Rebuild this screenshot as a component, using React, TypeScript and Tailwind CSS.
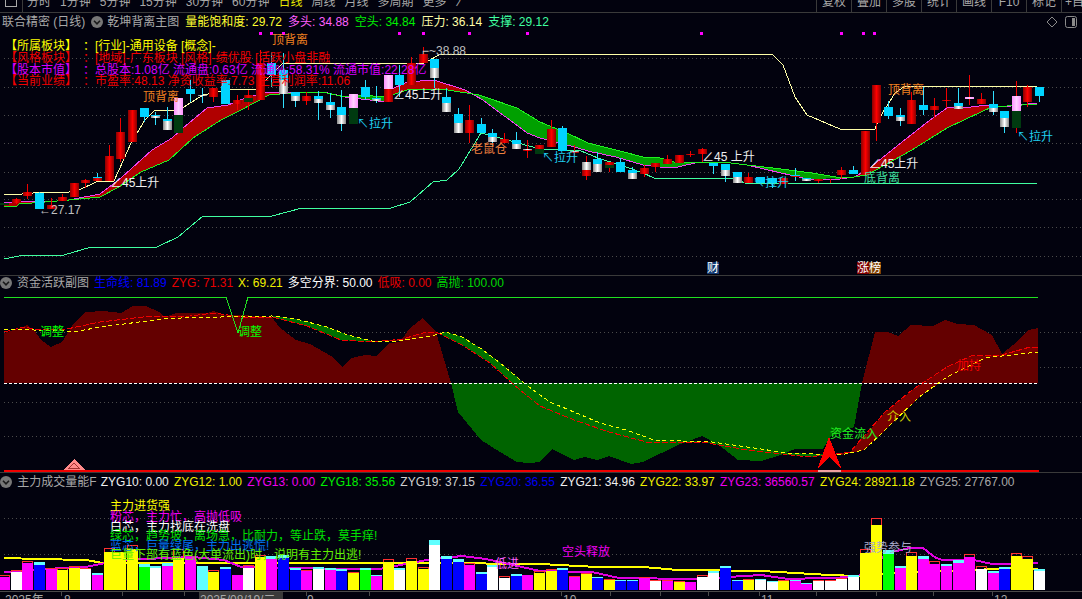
import React from "react"

type Pt = [number, number]

const X = (i: number) => 4 + 11.63 * i

const at = (pts: Pt[], x: number) => {
  if (x <= pts[0][0]) return pts[0][1]
  for (let i = 1; i < pts.length; i++) {
    if (x <= pts[i][0]) {
      const [x0, y0] = pts[i - 1]
      const [x1, y1] = pts[i]
      return y0 + ((y1 - y0) * (x - x0)) / (x1 - x0)
    }
  }
  return pts[pts.length - 1][1]
}

const toStr = (pts: Pt[]) => pts.map((p) => p.join(",")).join(" ")

function Band({ a, b, from, to, up, down }: { a: Pt[]; b: Pt[]; from: number; to: number; up: string; down: string }) {
  const rects = []
  for (let x = from; x < to; x++) {
    const ya = at(a, x)
    const yb = at(b, x)
    rects.push(<rect key={x} x={x} y={Math.min(ya, yb)} width={1} height={Math.abs(ya - yb)} fill={ya < yb ? up : down} />)
  }
  return <g shapeRendering="crispEdges">{rects}</g>
}

function Grid({ ys }: { ys: number[] }) {
  return (
    <g shapeRendering="crispEdges">
      {ys.map((y) => (
        <line key={y} x1={4} x2={1082} y1={y + 0.5} y2={y + 0.5} stroke="#4a4a4a" strokeDasharray="1 3" />
      ))}
    </g>
  )
}

function Line({ pts, c, w = 1, dash }: { pts: Pt[]; c: string; w?: number; dash?: string }) {
  return <polyline points={toStr(pts)} fill="none" stroke={c} strokeWidth={w} strokeDasharray={dash} shapeRendering="crispEdges" />
}

function Label({ x, y, c, t, size = 12 }: { x: number; y: number; c: string; t: string; size?: number }) {
  return (
    <text x={x} y={y} fill={c} fontSize={size} dominantBaseline="central">
      {t}
    </text>
  )
}

function Chevron() {
  return (
    <svg width="12" height="12" viewBox="0 0 12 12" className="shrink-0">
      <circle cx="6" cy="6" r="6" fill="#777" />
      <path d="M3 4.8 L6 7.8 L9 4.8" fill="none" stroke="#1a1a1a" strokeWidth="1.6" />
    </svg>
  )
}

const navItems = ["分时", "1分钟", "5分钟", "15分钟", "30分钟", "60分钟", "日线", "周线", "月线", "多周期", "更多", "〉"]
const tools = ["复权", "叠加", "多股", "统计", "画线", "F10", "标记"]

function TopBar() {
  return (
    <div className="flex h-[13px] shrink-0 overflow-hidden border-b border-[#3a3a3a] text-[12px] leading-[12px] text-[#a8a8a8]">
      <div className="ml-[5px] mt-[-4px] h-[11px] w-[12px] border border-[#a8a8a8]" />
      <div className="ml-[5px] w-px bg-[#3a3a3a]" />
      <div className="ml-[4px] mt-[-4px] flex gap-[9px]">
        {navItems.map((n) => (
          <span key={n} className={n === "日线" ? "text-[#e8e800]" : ""}>
            {n}
          </span>
        ))}
      </div>
      <div className="ml-auto flex">
        {tools.map((n) => (
          <div key={n} className="w-[35px] border-l border-[#3a3a3a] text-center">
            <span className="relative top-[-4px]">{n}</span>
          </div>
        ))}
        <div className="w-[21px] whitespace-nowrap border-l border-[#3a3a3a] pl-[3px]">
          <span className="relative top-[-4px]">+自</span>
        </div>
      </div>
    </div>
  )
}

type Item = { t: string; c: string }

function Values({ items }: { items: Item[] }) {
  return (
    <>
      {items.map((i) => (
        <span key={i.t} className={`whitespace-nowrap ${i.c}`}>
          {i.t}
        </span>
      ))}
    </>
  )
}

const mainValues: Item[] = [
  { t: "量能饱和度: 29.72", c: "text-[#ffff30]" },
  { t: "多头: 34.88", c: "text-[#ff60ff]" },
  { t: "空头: 34.84", c: "text-[#00f000]" },
  { t: "压力: 36.14", c: "text-[#ffffa8]" },
  { t: "支撑: 29.12", c: "text-[#40ffa0]" },
]

const fundValues: Item[] = [
  { t: "生命线: 81.89", c: "text-[#0000ff]" },
  { t: "ZYG: 71.31", c: "text-[#e80000]" },
  { t: "X: 69.21", c: "text-[#f0f000]" },
  { t: "多空分界: 50.00", c: "text-[#ffffff]" },
  { t: "低吸: 0.00", c: "text-[#e80000]" },
  { t: "高抛: 100.00", c: "text-[#00d800]" },
]

const volValues: Item[] = [
  { t: "ZYG10: 0.00", c: "text-[#f0f0f0]" },
  { t: "ZYG12: 1.00", c: "text-[#f0f000]" },
  { t: "ZYG13: 0.00", c: "text-[#f000f0]" },
  { t: "ZYG18: 35.56", c: "text-[#00f000]" },
  { t: "ZYG19: 37.15", c: "text-[#d0d0d0]" },
  { t: "ZYG20: 36.55", c: "text-[#0000f0]" },
  { t: "ZYG21: 34.96", c: "text-[#f0f0f0]" },
  { t: "ZYG22: 33.97", c: "text-[#f0f000]" },
  { t: "ZYG23: 36560.57", c: "text-[#f000f0]" },
  { t: "ZYG24: 28921.18", c: "text-[#f0f000]" },
  { t: "ZYG25: 27767.00", c: "text-[#a8a8a8]" },
]

type Kind = "r" | "c" | "w" | "p" | "g" | "x" | "q" | "k"

const kinds: Record<Kind, [string, string, string]> = {
  r: ["url(#red)", "url(#red)", "#f00000"],
  c: ["#00d4ff", "#00d4ff", "#30e0ff"],
  w: ["#00d4ff", "url(#silver)", "#30e0ff"],
  p: ["url(#pink)", "#003a10", "#f00000"],
  g: ["url(#red)", "#003a10", "#f00000"],
  x: ["url(#silver)", "url(#red)", "#f00000"],
  q: ["url(#pink)", "url(#red)", "#f00000"],
  k: ["#00d4ff", "url(#red)", "#30e0ff"],
}

// kind, body top, split, body bottom, wick top, wick bottom
const candles: [Kind, number, number, number, number, number][] = [
  ["g", 203, 203, 205, 203, 205], ["r", 199, 203, 203, 198, 204], ["r", 192, 196, 196, 184, 199], ["c", 193, 209, 209, 192, 209],
  ["r", 205, 209, 209, 198, 209], ["r", 197, 201, 201, 194, 201], ["r", 183, 197, 197, 183, 197], ["r", 180, 183, 183, 179, 188],
  ["k", 177, 178, 181, 173, 181], ["r", 156, 181, 181, 145, 181], ["r", 132, 159, 159, 118, 162], ["r", 110, 142, 142, 110, 142],
  ["c", 108, 117, 117, 108, 122], ["w", 115, 116, 118, 112, 125], ["w", 119, 121, 130, 107, 130], ["p", 98, 115, 133, 98, 133],
  ["c", 89, 94, 94, 80, 102], ["w", 95, 95, 96, 88, 103], ["r", 88, 97, 97, 88, 102], ["c", 80, 104, 104, 80, 104],
  ["r", 100, 104, 104, 95, 110], ["g", 95, 98, 102, 90, 110], ["r", 63, 100, 100, 50, 100], ["c", 63, 75, 75, 52, 87],
  ["w", 70, 80, 94, 53, 108], ["w", 92, 96, 101, 92, 107], ["r", 96, 101, 101, 92, 105], ["w", 96, 99, 103, 91, 120],
  ["w", 102, 105, 110, 93, 118], ["w", 107, 115, 124, 90, 131], ["p", 94, 108, 124, 94, 124], ["c", 87, 97, 97, 80, 100],
  ["w", 98, 99, 101, 86, 103], ["q", 75, 89, 102, 75, 102], ["c", 75, 85, 85, 65, 97], ["r", 63, 85, 85, 57, 85],
  ["r", 54, 63, 63, 47, 63], ["w", 59, 68, 78, 59, 88], ["w", 97, 103, 112, 88, 112], ["w", 114, 123, 133, 108, 133],
  ["r", 120, 133, 133, 105, 143], ["c", 124, 133, 133, 118, 133], ["w", 133, 137, 142, 129, 147], ["r", 139, 143, 143, 133, 143],
  ["w", 140, 144, 149, 132, 149], ["x", 149, 150, 151, 140, 158], ["g", 145, 149, 154, 145, 154], ["r", 129, 147, 147, 120, 147],
  ["c", 128, 151, 151, 126, 151], ["x", 151, 152, 153, 145, 158], ["x", 162, 170, 176, 156, 180], ["w", 159, 164, 172, 152, 172],
  ["g", 162, 165, 168, 162, 172], ["c", 162, 172, 172, 158, 172], ["w", 170, 173, 179, 167, 179], ["r", 168, 174, 174, 165, 177],
  ["r", 163, 167, 167, 163, 172], ["r", 159, 164, 164, 155, 164], ["r", 155, 163, 163, 155, 163], ["r", 154, 155, 155, 151, 157],
  ["r", 149, 154, 154, 148, 162], ["c", 163, 166, 166, 163, 174], ["w", 164, 170, 176, 164, 182], ["w", 172, 177, 183, 172, 183],
  ["r", 177, 183, 183, 173, 183], ["c", 177, 183, 183, 177, 183], ["c", 178, 183, 183, 178, 188], ["r", 178, 184, 184, 178, 184],
  ["k", 175, 176, 177, 168, 181], ["w", 178, 179, 181, 178, 181], ["r", 179, 181, 181, 179, 183], ["g", 178, 178, 179, 178, 183],
  ["r", 170, 175, 175, 167, 179], ["c", 170, 174, 174, 166, 174], ["r", 131, 175, 175, 131, 175], ["r", 85, 123, 123, 85, 141],
  ["c", 107, 116, 116, 101, 119], ["w", 115, 117, 121, 108, 126], ["r", 100, 124, 124, 92, 124], ["c", 105, 110, 110, 87, 115],
  ["r", 106, 110, 110, 98, 117], ["r", 100, 101, 101, 88, 108], ["w", 103, 106, 109, 88, 109], ["q", 97, 99, 99, 75, 105],
  ["r", 99, 104, 104, 93, 104], ["w", 104, 108, 112, 91, 115], ["w", 111, 118, 127, 111, 133], ["p", 96, 111, 128, 81, 133],
  ["r", 87, 102, 102, 85, 107], ["c", 87, 96, 96, 87, 102],
]

const pinkLine: Pt[] = [[4, 203], [21, 201], [45, 202], [69, 200], [100, 194], [121, 178], [152, 150], [172, 138], [183, 128], [207, 108], [228, 105], [248, 97], [269, 92], [303, 92], [328, 93], [345, 97], [386, 102], [390, 90], [407, 82], [434, 80], [465, 90], [483, 100], [500, 113], [510, 120], [527, 133], [540, 138], [567, 145], [592, 152], [616, 157], [643, 165], [660, 167], [678, 167], [699, 162], [723, 162], [747, 165], [781, 173], [812, 180], [840, 179], [854, 177], [867, 170], [902, 142], [930, 120], [947, 108], [971, 107], [988, 105], [1002, 107], [1037, 103]]
const greenLine: Pt[] = [[4, 206], [17, 206], [19, 204], [45, 202], [69, 200], [100, 197], [117, 188], [141, 172], [169, 160], [193, 138], [221, 120], [241, 110], [269, 95], [303, 92], [327, 93], [345, 97], [359, 95], [386, 97], [407, 90], [434, 89], [448, 90], [479, 95], [517, 108], [540, 122], [567, 133], [588, 143], [616, 150], [643, 157], [660, 158], [678, 163], [688, 162], [723, 162], [747, 165], [781, 169], [812, 173], [836, 177], [854, 177], [867, 175], [885, 165], [912, 150], [947, 128], [981, 112], [992, 107], [1037, 104]]
const pressure: Pt[] = [[4, 194], [22, 194], [45, 192], [69, 192], [79, 190], [96, 182], [114, 181], [119, 170], [131, 143], [145, 120], [155, 110], [179, 110], [203, 95], [231, 89], [257, 89], [283, 63], [424, 63], [441, 54], [772, 54], [783, 65], [795, 97], [807, 115], [840, 129], [875, 129], [880, 117], [895, 93], [905, 86], [1037, 86]]
const support: Pt[] = [[4, 259], [24, 255], [64, 255], [91, 247], [157, 247], [178, 237], [203, 216], [272, 216], [302, 208], [391, 208], [410, 202], [433, 182], [447, 180], [459, 169], [481, 133], [507, 140], [540, 149], [581, 151], [598, 158], [626, 167], [643, 173], [654, 178], [733, 178], [745, 183], [1037, 183]]

const marks = [260, 271, 283, 399, 423, 469, 527, 701, 841, 863, 874]

const mainLabels = [
  { x: 272, y: 40, c: "#f08020", t: "顶背离" },
  { x: 143, y: 97, c: "#f08020", t: "顶背离" },
  { x: 888, y: 90, c: "#f08020", t: "顶背离" },
  { x: 357, y: 124, c: "#20d0f0", t: "↖拉升" },
  { x: 542, y: 158, c: "#20d0f0", t: "↖拉升" },
  { x: 753, y: 183, c: "#20d0f0", t: "↖拉升" },
  { x: 1017, y: 137, c: "#20d0f0", t: "↖拉升" },
  { x: 110, y: 183, c: "#f0f0f0", t: "∠45上升" },
  { x: 393, y: 95, c: "#f0f0f0", t: "∠45上升" },
  { x: 702, y: 157, c: "#f0f0f0", t: "∠45 上升" },
  { x: 869, y: 164, c: "#f0f0f0", t: "∠45上升" },
  { x: 471, y: 149, c: "#f08040", t: "老鼠仓" },
  { x: 864, y: 178, c: "#40e0a0", t: "底背离" },
  { x: 39, y: 210, c: "#c0c0c0", t: "←27.17" },
  { x: 422, y: 51, c: "#c0c0c0", t: "⌐~38.88" },
]

const infoRows = [
  { c: "#ffff00", k: "【所属板块】", v: "[行业]-通用设备 [概念]-", y: 46 },
  { c: "#f00000", k: "【风格板块】", v: "[地域]-广东板块 [风格]-绩优股 [活跃小盘非融", y: 58 },
  { c: "#d800ff", k: "【股本市值】", v: "总股本:1.08亿 流通盘:0.63亿 流通%:58.31% 流通市值:22.28亿", y: 70 },
  { c: "#f00000", k: "【当前业绩】", v: "市盈率:48.13 净资收益率:7.73 主营利润率:11.06", y: 81 },
]

function MainChart() {
  return (
    <svg width={1082} height={244} viewBox="0 31 1082 244" className="block">
      <defs>
        <linearGradient id="red">
          <stop offset="0" stopColor="#8a0000" />
          <stop offset="0.5" stopColor="#ff0000" />
          <stop offset="1" stopColor="#8a0000" />
        </linearGradient>
        <linearGradient id="silver">
          <stop offset="0" stopColor="#888888" />
          <stop offset="0.5" stopColor="#ffffff" />
          <stop offset="1" stopColor="#888888" />
        </linearGradient>
        <linearGradient id="pink">
          <stop offset="0" stopColor="#ff90ff" />
          <stop offset="0.5" stopColor="#ffd0ff" />
          <stop offset="1" stopColor="#ff90ff" />
        </linearGradient>
      </defs>
      <Grid ys={[58, 87, 115, 143, 172, 199, 227, 256]} />
      {marks.map((x) => (
        <rect key={x} x={x - 1} y={32} width={3} height={3} fill="#ff00ff" />
      ))}
      <Band a={pinkLine} b={greenLine} from={4} to={1037} up="#b00000" down="#00a000" />
      <Line pts={pinkLine} c="#f040f0" />
      <Line pts={greenLine} c="#20f020" />
      <Line pts={pressure} c="#ffffa8" />
      <Line pts={support} c="#40ffa0" />
      <g shapeRendering="crispEdges">
        {candles.map(([k, top, split, bot, wt, wb], i) => {
          const [upper, lower, wick] = kinds[k]
          const x = Math.round(X(i))
          return (
            <g key={i}>
              <line x1={x + 0.5} x2={x + 0.5} y1={wt} y2={wb} stroke={wick} />
              <rect x={x - 4} y={top} width={9} height={Math.max(split - top, 1)} fill={upper} />
              {bot > split && <rect x={x - 4} y={split} width={9} height={bot - split} fill={lower} />}
            </g>
          )
        })}
      </g>
      {infoRows.map((r) => (
        <g key={r.k}>
          <Label x={5} y={r.y} c={r.c} t={r.k} />
          <Label x={83} y={r.y} c={r.c} t="：" />
          <Label x={95} y={r.y} c={r.c} t={r.v} />
        </g>
      ))}
      {mainLabels.map((l) => (
        <Label key={l.x + l.t} x={l.x} y={l.y} c={l.c} t={l.t} />
      ))}
      <rect x={707} y={262} width={12} height={12} fill="#103870" />
      <Label x={707} y={268} c="#ffffff" t="财" />
      <rect x={857} y={262} width={12} height={12} fill="#800000" />
      <rect x={869} y={262} width={12} height={12} fill="#804000" />
      <Label x={857} y={268} c="#ffffff" t="涨榜" />
    </svg>
  )
}

const redArea: Pt[] = [[4, 383], [4, 333], [21, 328], [27, 325], [34, 330], [41, 340], [51, 347], [62, 342], [74, 323], [86, 312], [103, 311], [121, 313], [133, 306], [146, 306], [159, 312], [165, 317], [176, 313], [207, 313], [214, 311], [224, 315], [241, 315], [272, 317], [279, 327], [296, 340], [310, 344], [331, 356], [342, 367], [352, 358], [365, 355], [376, 356], [390, 343], [400, 342], [410, 328], [423, 318], [436, 332], [451, 383]]
const greenArea: Pt[] = [[451, 383], [458, 412], [481, 440], [500, 452], [517, 462], [529, 463], [540, 462], [552, 449], [574, 460], [585, 457], [597, 460], [609, 456], [631, 464], [643, 462], [678, 445], [702, 436], [719, 445], [738, 460], [761, 461], [781, 455], [795, 449], [823, 449], [830, 437], [854, 427], [862, 383]]
const redArea2: Pt[] = [[862, 383], [875, 332], [888, 332], [898, 336], [911, 325], [933, 326], [945, 320], [957, 324], [974, 325], [992, 335], [1002, 354], [1019, 340], [1028, 330], [1038, 328], [1038, 383]]
const yellowX: Pt[] = [[4, 329], [64, 331], [79, 331], [100, 327], [124, 324], [162, 319], [200, 317], [221, 317], [272, 316], [296, 319], [327, 327], [348, 335], [372, 341], [396, 341], [431, 336], [446, 332], [462, 337], [483, 350], [500, 363], [524, 383], [540, 395], [550, 402], [574, 412], [600, 423], [626, 430], [654, 440], [712, 442], [747, 447], [788, 453], [840, 455], [864, 450], [885, 430], [919, 397], [947, 377], [985, 358], [1002, 356], [1038, 352]]
const redZyg: Pt[] = [[4, 332], [24, 327], [34, 329], [62, 330], [100, 322], [143, 317], [190, 316], [214, 313], [241, 317], [272, 317], [307, 326], [341, 340], [372, 342], [403, 339], [426, 332], [436, 332], [462, 345], [490, 363], [514, 385], [540, 406], [574, 420], [609, 432], [650, 443], [702, 442], [747, 450], [809, 457], [850, 452], [885, 412], [912, 390], [947, 367], [971, 356], [1002, 355], [1030, 347], [1038, 347]]
const highLine: Pt[] = [[4, 297], [226, 297], [238, 333], [248, 297], [1038, 297]]

function FundChart() {
  return (
    <svg width={1082} height={183} viewBox="0 290 1082 183" className="block">
      <Grid ys={[332, 367, 402, 436]} />
      <g shapeRendering="crispEdges">
        <polygon points={toStr(redArea)} fill="#640000" />
        <polygon points={toStr(redArea2)} fill="#640000" />
        <polygon points={toStr(greenArea)} fill="#006400" />
      </g>
      <Band a={yellowX} b={redZyg} from={272} to={1038} up="#007000" down="#7a0000" />
      <Line pts={redZyg} c="#f00000" dash="6 2" />
      <Line pts={yellowX} c="#ffff00" dash="4 3" />
      <Line pts={highLine} c="#20e020" />
      <line x1={4} x2={1039} y1={383.5} y2={383.5} stroke="#ffffff" strokeDasharray="3 2" shapeRendering="crispEdges" />
      <line x1={4} x2={1039} y1={470.5} y2={470.5} stroke="#f00000" strokeWidth={2} shapeRendering="crispEdges" />
      <path d="M829 437 L842 470 L829 457 L817 470 Z" fill="#ff0000" shapeRendering="crispEdges" />
      <line x1={818} x2={841} y1={470.5} y2={470.5} stroke="#f0a0a0" strokeWidth={2} shapeRendering="crispEdges" />
      <path d="M74 459 L85 470 L63 470 Z" fill="#ff8a8a" shapeRendering="crispEdges" />
      <path d="M74 463 L79 468 L69 468 Z" fill="none" stroke="#a03030" shapeRendering="crispEdges" />
      <Label x={40} y={332} c="#00ff00" t="调整" />
      <Label x={238} y={332} c="#00ff00" t="调整" />
      <Label x={830} y={434} c="#20f020" t="资金流入" />
      <Label x={887} y={417} c="#c8c800" t="介入" />
      <Label x={957} y={366} c="#f00000" t="加持" />
    </svg>
  )
}

type Bar = [string, number, "o" | "c", number]

const barColors: Record<string, string> = { m: "#ff00ff", w: "#ffffff", b: "#0000ff", y: "#ffff00", g: "#00ff00", c: "#60ffff" }

const bars: Bar[] = [
  ["m", 322, "o", 316], ["w", 306, "o", 300], ["m", 280, "o", 273], ["b", 285, "c", 276], ["m", 298, "o", 294], ["y", 300, "o", 295],
  ["y", 293, "o", 287], ["w", 297, "o", 295], ["m", 315, "c", 309], ["y", 246, "o", 234], ["y", 246, "c", 246], ["y", 238, "o", 224],
  ["g", 291, "c", 282], ["w", 294, "c", 288], ["m", 288, "c", 279], ["y", 265, "o", 237], ["m", 262, "c", 262], ["c", 288, "c", 288],
  ["y", 305, "o", 300], ["b", 297, "c", 291], ["m", 316, "o", 314], ["w", 294, "o", 285], ["y", 262, "o", 255], ["m", 268, "c", 258],
  ["b", 265, "c", 255], ["b", 300, "c", 294], ["m", 303, "o", 300], ["w", 297, "c", 291], ["m", 299, "c", 293], ["b", 302, "c", 296],
  ["y", 309, "o", 305], ["g", 300, "c", 294], ["m", 319, "c", 315], ["y", 276, "o", 268], ["w", 300, "c", 293], ["y", 273, "o", 265],
  ["y", 298, "o", 292], ["w", 225, "c", 210], ["b", 267, "c", 258], ["b", 275, "c", 267], ["m", 285, "o", 278], ["b", 311, "c", 306],
  ["w", 291, "c", 285], ["w", 324, "o", 318], ["b", 317, "c", 313], ["m", 316, "o", 314], ["y", 308, "o", 303], ["y", 303, "o", 297],
  ["b", 300, "c", 294], ["m", 320, "o", 318], ["y", 312, "o", 308], ["b", 325, "c", 321], ["y", 330, "o", 327], ["b", 332, "c", 330],
  ["b", 332, "c", 330], ["m", 323, "o", 321], ["w", 333, "o", 331], ["m", 332, "o", 330], ["y", 336, "o", 334], ["m", 336, "c", 336],
  ["w", 321, "o", 315], ["w", 309, "c", 303], ["b", 294, "c", 288], ["b", 333, "c", 330], ["y", 329, "o", 327], ["w", 330, "c", 327],
  ["w", 335, "c", 332], ["y", 333, "o", 331], ["m", 333, "c", 330], ["m", 342, "c", 339], ["w", 333, "o", 331], ["w", 333, "o", 331],
  ["w", 327, "o", 324], ["w", 321, "c", 316], ["y", 249, "o", 237], ["y", 165, "o", 145], ["g", 252, "c", 240], ["m", 294, "c", 288],
  ["y", 258, "o", 246], ["m", 267, "c", 258], ["m", 282, "o", 273], ["m", 288, "c", 282], ["m", 279, "c", 270], ["m", 261, "o", 253],
  ["w", 297, "o", 289], ["m", 309, "c", 303], ["b", 297, "c", 291], ["y", 258, "o", 250], ["y", 267, "o", 259], ["w", 303, "c", 297],
]

const yellowVol: Pt[] = [[4, 558], [38, 559], [86, 560], [103, 563], [431, 563], [540, 564], [598, 567], [643, 567], [678, 570], [761, 571], [795, 573], [830, 575], [857, 576], [895, 573], [1023, 568], [1038, 569]]
const magentaVol: Pt[] = [[4, 572], [45, 569], [86, 567], [120, 560], [193, 557], [224, 560], [241, 567], [345, 569], [379, 569], [427, 560], [462, 556], [486, 559], [540, 571], [592, 572], [619, 578], [695, 579], [761, 575], [788, 579], [857, 577], [888, 553], [909, 548], [923, 548], [936, 558], [943, 560], [974, 560], [992, 564], [1038, 563]]

const noteRows = [
  { t: "主力进货强", c: "#ffff00", y: 506 },
  { t: "粉芯，主力忙，高抛低吸", c: "#f000f0", y: 517 },
  { t: "白芯，主力找底在洗盘", c: "#ffffff", y: 527 },
  { t: "绿芯，趋势坡，离场急，比耐力，等止跌，莫手痒!", c: "#00e000", y: 536 },
  { t: "蓝芯，巨量绿尾，主力出逃慌!", c: "#0070f0", y: 546 },
  { t: "巨量下部有蓝色(大单流出)时，说明有主力出逃!", c: "#60f000", y: 555 },
]

function VolumeChart() {
  return (
    <svg width={1082} height={100} viewBox="0 491 1082 100" className="block">
      <Grid ys={[518, 554]} />
      <Line pts={yellowVol} c="#ffff00" w={2} />
      <Line pts={magentaVol} c="#e000e0" w={2} />
      <g shapeRendering="crispEdges">
        {bars.map(([c, top, cap, capTop], i) => {
          const x = Math.round(X(i)) - 5
          const y = Math.round(470 + top / 3)
          const cy = Math.round(470 + capTop / 3)
          return (
            <g key={i}>
              {cap === "c" && <rect x={x} y={cy} width={11} height={y - cy} fill="#60ffff" />}
              {cap === "o" && <rect x={x + 0.5} y={cy + 0.5} width={10} height={y - cy} fill="none" stroke="#ff3030" />}
              <rect x={x} y={y} width={11} height={590 - y} fill={barColors[c]} />
            </g>
          )
        })}
      </g>
      {noteRows.map((n) => (
        <Label key={n.t} x={110} y={n.y} c={n.c} t={n.t} />
      ))}
      <Label x={495} y={564} c="#ff60ff" t="低进" />
      <Label x={562} y={552} c="#f000f0" t="空头释放" />
      <Label x={864} y={548} c="#a8a8c8" t="强势参与" />
    </svg>
  )
}

function TimeAxis() {
  const ticks = [61, 122, 184, 306, 369, 561, 610, 660, 708, 759, 816, 876, 933, 992]
  return (
    <svg width={1082} height={8} viewBox="0 591 1082 8" className="block">
      <line x1={0} x2={1082} y1={591.5} y2={591.5} stroke="#4a4a4a" />
      {ticks.map((x) => (
        <line key={x} x1={x + 0.5} x2={x + 0.5} y1={592} y2={596} stroke="#4a4a4a" />
      ))}
      <rect x={199} y={592} width={84} height={7} fill="#3a3a3a" />
      <g fill="#a8a8a8" fontSize={12}>
        <text x={5} y={604}>2025年</text>
        <text x={64} y={604}>8</text>
        <text x={200} y={604}>2025/08/19/二</text>
        <text x={307} y={604}>9</text>
        <text x={563} y={604}>10</text>
        <text x={761} y={604}>11</text>
        <text x={994} y={604}>12</text>
      </g>
    </svg>
  )
}

export default function App() {
  return (
    <div className="flex h-[599px] w-[1082px] flex-col overflow-hidden bg-[#02020e] text-[12px] [font-family:'Liberation_Sans','Noto_Sans_CJK_SC',sans-serif]">
      <TopBar />
      <div className="h-[263px] shrink-0 border-b border-[#3a3a3a]">
        <div className="flex h-[18px] items-center gap-[6px] pl-[2px] text-[#a8a8a8]">
          <span className="whitespace-nowrap">联合精密 (日线)</span>
          <Chevron />
          <span className="ml-[-2px] whitespace-nowrap">乾坤背离主图</span>
          <Values items={mainValues} />
          <svg width="12" height="12" viewBox="0 0 12 12" className="ml-auto shrink-0">
            <path d="M6 1 L11 6 L6 11 L1 6 Z" fill="none" stroke="#8a8a8a" />
          </svg>
          <svg width="12" height="12" viewBox="0 0 12 12" className="ml-[1px] mr-[5px] shrink-0">
            <rect x="0.5" y="0.5" width="11" height="11" rx="2" fill="none" stroke="#8a8a8a" />
            <rect x="7" y="2" width="3" height="8" fill="#8a8a8a" />
          </svg>
        </div>
        <MainChart />
      </div>
      <div className="h-[197px] shrink-0 border-b border-[#3a3a3a]">
        <div className="flex h-[14px] items-center gap-[5px] text-[#a8a8a8]">
          <Chevron />
          <span className="whitespace-nowrap">资金活跃副图</span>
          <Values items={fundValues} />
        </div>
        <FundChart />
      </div>
      <div className="h-[118px] shrink-0">
        <div className="flex h-[18px] items-center gap-[5.2px] text-[#a8a8a8]">
          <Chevron />
          <span className="mr-[-1px] whitespace-nowrap">主力成交量能F</span>
          <Values items={volValues} />
        </div>
        <VolumeChart />
      </div>
      <TimeAxis />
    </div>
  )
}
